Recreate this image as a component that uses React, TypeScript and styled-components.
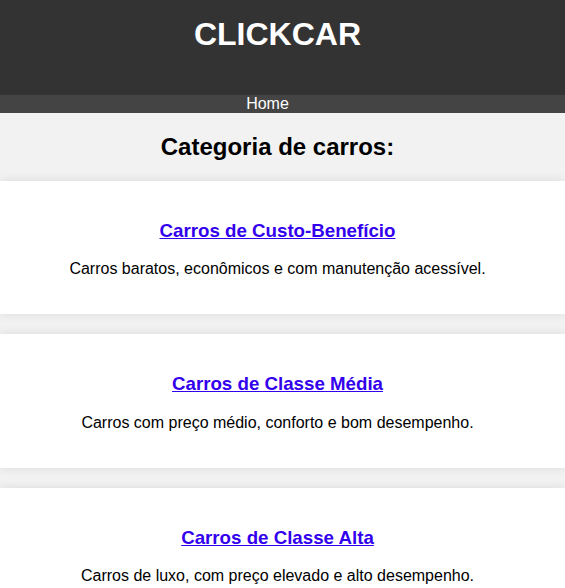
import React from "react";
import styled, { createGlobalStyle } from "styled-components";

const GlobalStyle = createGlobalStyle`
  html, body {
    margin: 0;
    padding: 0;
  }
  body {
    font-family: "Liberation Sans", Arial, sans-serif;
    background: #f2f2f2;
    color: #000;
  }
`;

const Header = styled.header`
  background: #333333;
  color: #ffffff;
  text-align: center;
  padding: 16px 10px 42px 0;
`;

const Title = styled.h1`
  margin: 0;
  font-size: 32px;
  font-weight: bold;
`;

const Nav = styled.nav`
  background: #444444;
  text-align: center;
  padding-right: 10px;
`;

const NavLink = styled.a`
  color: #ffffff;
  text-decoration: none;
  font-size: 16px;
  margin-right: 20px;
`;

const Main = styled.main`
  text-align: center;
`;

const SectionTitle = styled.h2`
  font-size: 24px;
  margin: 20px 0;
  padding-right: 10px;
`;

const Card = styled.section`
  background: #ffffff;
  margin: 20px 0;
  padding: 20px 30px 20px 20px;
  box-shadow: 0 0 10px rgba(0, 0, 0, 0.1);
`;

const CardTitle = styled.h3`
  font-size: 18.72px;
  margin: 18.72px 0;
`;

const CardLink = styled.a`
  color: #3300ee;
  text-decoration: underline;
`;

const CardText = styled.p`
  font-size: 16px;
  margin: 16px 0;
`;

const categories = [
  {
    title: "Carros de Custo-Benefício",
    text: "Carros baratos, econômicos e com manutenção acessível.",
  },
  {
    title: "Carros de Classe Média",
    text: "Carros com preço médio, conforto e bom desempenho.",
  },
  {
    title: "Carros de Classe Alta",
    text: "Carros de luxo, com preço elevado e alto desempenho.",
  },
];

export default function App() {
  return (
    <>
      <GlobalStyle />
      <Header>
        <Title>CLICKCAR</Title>
      </Header>
      <Nav>
        <NavLink href="#">Home</NavLink>
      </Nav>
      <Main>
        <SectionTitle>Categoria de carros:</SectionTitle>
        {categories.map((c) => (
          <Card key={c.title}>
            <CardTitle>
              <CardLink href="#">{c.title}</CardLink>
            </CardTitle>
            <CardText>{c.text}</CardText>
          </Card>
        ))}
      </Main>
    </>
  );
}
